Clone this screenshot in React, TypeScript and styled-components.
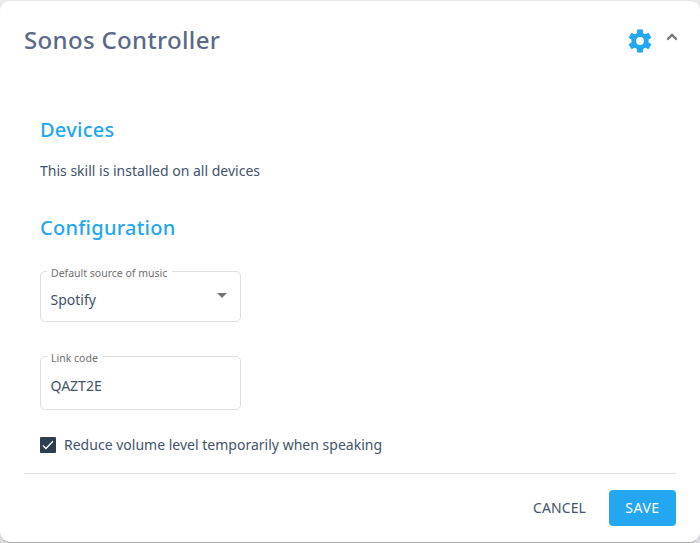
import React from "react";
import styled, { createGlobalStyle } from "styled-components";

const Global = createGlobalStyle`
  * { box-sizing: border-box; }
  body { margin: 0; background: linear-gradient(#e9eaec, #e9eaec 75%, #dcdde0); font-family: "Noto Sans", sans-serif; color: #43536a; }
  h1, h2, p, fieldset { margin: 0; }
`;

const Card = styled.main`
  width: 700px;
  height: 543px;
  padding: 0 24px;
  background: #fff;
  border: solid #e6e7e9;
  border-width: 1px 0 1px 0;
  border-bottom-color: #a8a8a8;
  border-radius: 10px;
`;

const Header = styled.header`
  display: flex;
  align-items: center;
  height: 78px;
`;

const Title = styled.h1`
  flex: 1;
  font-size: 24px;
  font-weight: 500;
  line-height: 32px;
  letter-spacing: 0.34px;
  color: #5a6a87;
`;

const GearIcon = styled.svg`
  width: 28px;
  height: 28px;
  fill: #22a7f0;
  margin-top: 2px;
`;

const ChevronIcon = styled.svg`
  width: 22px;
  height: 22px;
  fill: #757575;
  margin: -7px -7px 0 7px;
`;

const Body = styled.section`
  height: 395px;
  padding: 37px 16px 0;
  border-bottom: 1px solid #e0e0e0;
`;

const Heading = styled.h2`
  font-size: 20px;
  font-weight: 500;
  line-height: 28px;
  letter-spacing: 0.25px;
  color: #22a7f0;
`;

const Text = styled.p`
  margin: 17px 0 33px;
  font-size: 14px;
  line-height: 20px;
`;

const Field = styled.fieldset<{ $height: number; $gap: number }>`
  width: 201px;
  height: ${(p) => p.$height}px;
  margin-top: ${(p) => p.$gap}px;
  padding: 0 10px 0 9.5px;
  border: 1px solid #dedede;
  border-radius: 5px;
`;

const Legend = styled.legend`
  height: 14px;
  margin-left: -3.5px;
  padding: 0 5px 0 4px;
  font-size: 10.5px;
  line-height: 18px;
  color: #707070;
`;

const Value = styled.div<{ $height: number }>`
  display: flex;
  align-items: center;
  justify-content: space-between;
  height: ${(p) => p.$height}px;
  font-size: 14px;
`;

const Arrow = styled.svg`
  width: 10px;
  height: 5px;
  fill: #757575;
  margin: -8px 3px 0 0;
`;

const CheckRow = styled.div`
  display: flex;
  align-items: center;
  gap: 8px;
  height: 20px;
  margin-top: 24px;
  font-size: 14px;
  letter-spacing: 0.01px;
`;

const Box = styled.svg`
  width: 16px;
  height: 16px;
  margin-top: 2px;
`;

const Footer = styled.footer`
  display: flex;
  justify-content: flex-end;
  padding-top: 16px;
`;

const Button = styled.button<{ $primary?: boolean }>`
  height: 36px;
  width: ${(p) => (p.$primary ? 67 : 99)}px;
  padding: 0 0 1px;
  border: 0;
  border-radius: 4px;
  font: 400 14px "Noto Sans", sans-serif;
  letter-spacing: ${(p) => (p.$primary ? 0.5 : 0.1)}px;
  color: ${(p) => (p.$primary ? "#fff" : "#43536a")};
  background: ${(p) => (p.$primary ? "#22a7f0" : "transparent")};
`;

export default function App() {
  return (
    <>
      <Global />
      <Card>
        <Header>
          <Title>Sonos Controller</Title>
          <GearIcon viewBox="-14 -14 28 28">
            <circle r="8.6" />
            {[0, 60, 120].map((angle) => (
              <rect key={angle} x="-3" y="-11.5" width="6" height="23" rx="0.7" transform={`rotate(${angle})`} />
            ))}
            <circle r="3.9" fill="#fff" />
          </GearIcon>
          <ChevronIcon viewBox="0 0 24 24">
            <path d="M12 8l-6 6 1.7 1.7L12 11.4l4.3 4.3L18 14z" />
          </ChevronIcon>
        </Header>
        <Body>
          <Heading>Devices</Heading>
          <Text>This skill is installed on all devices</Text>
          <Heading>Configuration</Heading>
          <Field $height={58} $gap={22}>
            <Legend>Default source of music</Legend>
            <Value $height={42}>
              Spotify
              <Arrow viewBox="0 0 10 5"><path d="M0 0l5 5 5-5z" /></Arrow>
            </Value>
          </Field>
          <Field $height={61} $gap={27}>
            <Legend>Link code</Legend>
            <Value $height={44}>QAZT2E</Value>
          </Field>
          <CheckRow>
            <Box viewBox="0 0 16 16">
              <rect width="16" height="16" rx="1" fill="#2c3e50" />
              <path d="M2.8 8.4l3.1 3.1L13 4.3" fill="none" stroke="#fff" strokeWidth="1.3" />
            </Box>
            Reduce volume level temporarily when speaking
          </CheckRow>
        </Body>
        <Footer>
          <Button>CANCEL</Button>
          <Button $primary>SAVE</Button>
        </Footer>
      </Card>
    </>
  );
}
